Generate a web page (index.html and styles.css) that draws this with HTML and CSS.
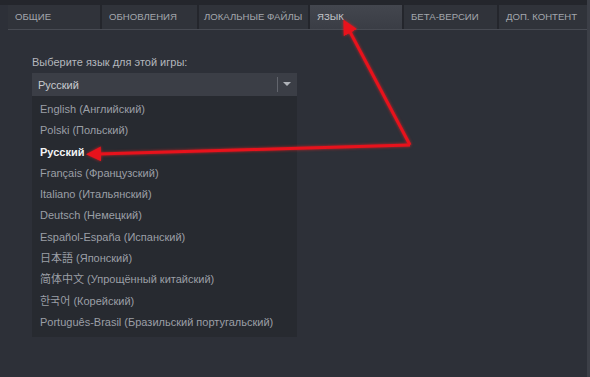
FILE: index.html
```html
<!DOCTYPE html>
<html lang="ru">

<head>
    <meta charset="UTF-8">
    <meta name="viewport" content="width=device-width, initial-scale=1.0">
    <title>Свойства игры</title>
    <link rel="stylesheet" href="styles.css">
</head>

<body>
    <div class="window">
        <ul class="tabs">
            <li class="tab tab-general">ОБЩИЕ</li>
            <li class="tab tab-updates">ОБНОВЛЕНИЯ</li>
            <li class="tab tab-local">ЛОКАЛЬНЫЕ ФАЙЛЫ</li>
            <li class="tab tab-lang active">ЯЗЫК</li>
            <li class="tab tab-beta">БЕТА-ВЕРСИИ</li>
            <li class="tab tab-dlc">ДОП. КОНТЕНТ</li>
        </ul>
        <div class="content">
            <div class="label">Выберите язык для этой игры:</div>
            <div class="select">
                <div class="select-box">
                    <span class="select-value">Русский</span>
                    <span class="select-arrow"></span>
                </div>
                <ul class="select-list">
                    <li>English (Английский)</li>
                    <li>Polski (Польский)</li>
                    <li class="selected">Русский</li>
                    <li>Français (Французский)</li>
                    <li>Italiano (Итальянский)</li>
                    <li>Deutsch (Немецкий)</li>
                    <li>Español-España (Испанский)</li>
                    <li lang="ja">日本語 (Японский)</li>
                    <li lang="zh-CN">简体中文 (Упрощённый китайский)</li>
                    <li lang="ko">한국어 (Корейский)</li>
                    <li>Português-Brasil (Бразильский португальский)</li>
                </ul>
            </div>
        </div>
    </div>
    <svg class="arrows" width="590" height="377" viewBox="0 0 590 377">
        <defs>
            <marker id="head" viewBox="0 0 10 10" refX="2" refY="5" markerWidth="5" markerHeight="5" orient="auto">
                <path d="M0,0 L10,5 L0,10 Z" fill="#e8121c"></path>
            </marker>
        </defs>
        <path d="M410,145 L98,154" stroke="#e8121c" stroke-width="3" fill="none" marker-end="url(#head)"></path>
        <path d="M410,145 L349,30" stroke="#e8121c" stroke-width="3" fill="none" marker-end="url(#head)"></path>
    </svg>
</body>

</html>
```

FILE: styles.css
```css
ul {
    margin: 0;
    padding: 0;
    list-style: none;
}

body {
    margin: 0;
    width: 590px;
    height: 377px;
    overflow: hidden;
    position: relative;
    background-color: #2d3038;
    font-family: "Liberation Sans", "Noto Sans CJK SC", "Noto Sans CJK JP", "Noto Sans CJK KR", sans-serif;
}

.window {
    height: 377px;
    background: linear-gradient(#24262c 0, #24262c 5px, #2d3038 5px);
    border-right: 3px solid #3c3f47;
    box-sizing: border-box;
}

.tabs {
    display: flex;
    gap: 2px;
    margin: 0 0 0 8px;
    padding-top: 5px;
    width: 579px;
    border-bottom: 1px solid #484b53;
    background-color: #24262c;
}

.tab {
    height: 24px;
    line-height: 24px;
    padding: 0 7px;
    box-sizing: border-box;
    font-size: 9.6px;
    color: #a3a7ad;
    white-space: nowrap;
    overflow: hidden;
    background-color: #30333a;
}

.tab-general { width: 92px; }
.tab-updates { width: 95px; }
.tab-local { width: 109px; padding-left: 5px; }
.tab-lang { width: 92px; }
.tab-beta { width: 93px; }
.tab-dlc { width: 88px; }

.tab.active {
    background: linear-gradient(#43464e, #3a3d45);
    color: #c4c7cc;
}

.content {
    padding: 25px 0 0 32px;
}

.label {
    font-size: 11px;
    color: #b4b7bd;
    height: 18px;
    line-height: 14px;
}

.select {
    width: 265px;
    margin-top: 0;
}

.select-box {
    display: flex;
    align-items: center;
    height: 23px;
    background-color: #3b3e46;
    font-size: 11px;
}

.select-value {
    flex: 1;
    padding-left: 6px;
    color: #c8cbd0;
}

.select-arrow {
    position: relative;
    width: 19px;
    height: 15px;
    border-left: 1px solid #62656d;
}

.select-arrow::after {
    content: "";
    position: absolute;
    left: 5px;
    top: 5px;
    border-left: 4px solid transparent;
    border-right: 4px solid transparent;
    border-top: 4px solid #b0b3b9;
}

.select-list {
    padding: 3px 0 4px;
    background-color: #272a30;
}

.select-list li {
    height: 21.3px;
    line-height: 21.3px;
    padding-left: 8px;
    font-size: 11px;
    color: #9b9fa6;
    white-space: nowrap;
}

.select-list .selected {
    color: #f2f3f5;
    font-weight: bold;
}

.arrows {
    position: absolute;
    left: 0;
    top: 0;
    pointer-events: none;
    filter: drop-shadow(0 0 1.5px rgba(255, 30, 30, 0.7));
}
```
